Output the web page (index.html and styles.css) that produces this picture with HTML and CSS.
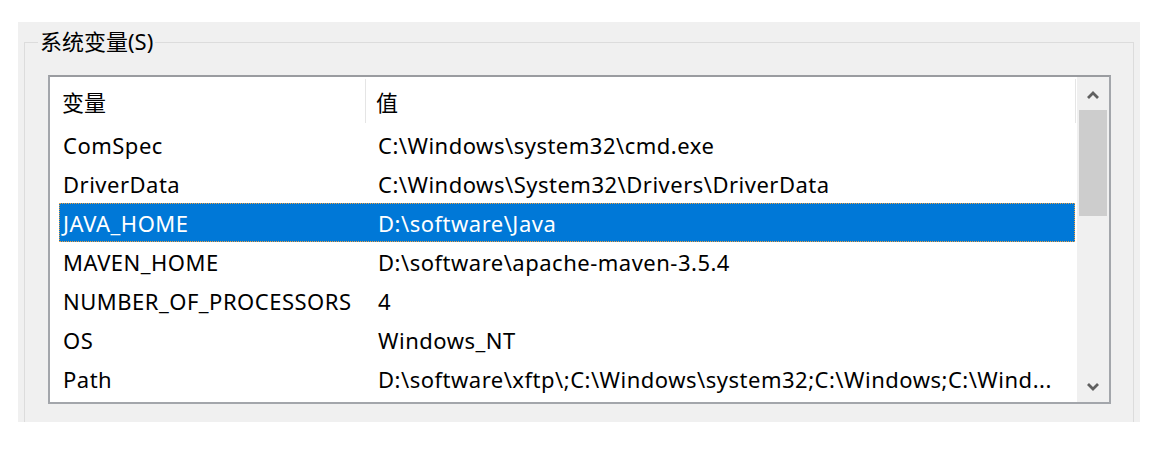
FILE: index.html
```html
<!DOCTYPE html>
<html lang="zh-CN">
<head>
<meta charset="utf-8">
<title>系统变量</title>
<link rel="stylesheet" href="styles.css">
</head>
<body>
<div class="panel">
  <fieldset class="group">
    <legend class="legend">系统变量(S)</legend>
    <div class="listbox">
      <div class="listmain">
        <div class="header">
          <div class="hcell hname">变量</div>
          <div class="hcell hvalue">值</div>
        </div>
        <div class="row"><div class="cname">ComSpec</div><div class="cvalue">C:\Windows\system32\cmd.exe</div></div>
        <div class="row"><div class="cname">DriverData</div><div class="cvalue">C:\Windows\System32\Drivers\DriverData</div></div>
        <div class="row selected"><div class="cname">JAVA_HOME</div><div class="cvalue">D:\software\Java</div></div>
        <div class="row"><div class="cname">MAVEN_HOME</div><div class="cvalue">D:\software\apache-maven-3.5.4</div></div>
        <div class="row"><div class="cname">NUMBER_OF_PROCESSORS</div><div class="cvalue">4</div></div>
        <div class="row"><div class="cname">OS</div><div class="cvalue">Windows_NT</div></div>
        <div class="row"><div class="cname">Path</div><div class="cvalue">D:\software\xftp\;C:\Windows\system32;C:\Windows;C:\Wind...</div></div>
      </div>
      <div class="scrollbar">
        <div class="sbtn sbtn-up">
          <svg width="14" height="10" viewBox="0 0 14 10"><path d="M2 8 L7 3 L12 8" fill="none" stroke="#606060" stroke-width="2.8"/></svg>
        </div>
        <div class="thumb"></div>
        <div class="track"></div>
        <div class="sbtn sbtn-down">
          <svg width="14" height="10" viewBox="0 0 14 10"><path d="M2 2 L7 7 L12 2" fill="none" stroke="#606060" stroke-width="2.8"/></svg>
        </div>
      </div>
    </div>
  </fieldset>
</div>
</body>
</html>
```
FILE: styles.css
```css
html, body {
  margin: 0;
  padding: 0;
  background: #ffffff;
}
body {
  font-family: "Noto Sans", "Noto Sans CJK SC", sans-serif;
  font-size: 22px;
  letter-spacing: 0.5px;
  color: #000;
}
.panel {
  margin: 22px 0 0 18px;
  width: 1122px;
  height: 400px;
  background: #f0f0f0;
  overflow: hidden;
  padding: 7px 0 0 6px;
  box-sizing: border-box;
}
.group {
  margin: 0;
  width: 1110px;
  box-sizing: border-box;
  border: 1px solid #dcdcdc;
  padding: 19px 0 40px 23px;
  min-width: 0;
  height: 460px;
}
.legend {
  padding: 0 2px 3px;
  margin-left: -10px;
  font-size: 22px;
  letter-spacing: 0;
  line-height: 24px;
  color: #000;
}
.listbox {
  width: 1063px;
  height: 329px;
  box-sizing: border-box;
  border: 2px solid #a3a6ab;
  border-top-color: #9a9ca0;
  background: #fff;
  display: flex;
}
.listmain {
  flex: 1;
  padding-left: 9px;
  overflow: hidden;
}
.header {
  height: 48px;
  display: flex;
  align-items: center;
  width: 1017px;
}
.hcell {
  height: 44px;
  display: flex;
  align-items: center;
  letter-spacing: 0;
}
.hname {
  width: 307px;
  padding-left: 3px;
  box-sizing: border-box;
  border-right: 1px solid #e5e5e5;
}
.hvalue {
  flex: 1;
  padding-left: 10px;
  border-right: 1px solid #e5e5e5;
}
.row {
  height: 39px;
  width: 1016px;
  display: flex;
  align-items: center;
  box-sizing: border-box;
  border: 1px solid transparent;
  white-space: nowrap;
}
.cname {
  width: 314px;
  padding-left: 3px;
  box-sizing: border-box;
  overflow: hidden;
}
.cvalue {
  flex: 1;
  padding-left: 4px;
  overflow: hidden;
}
.selected {
  background: #0078d7;
  color: #fff;
  border: 1px dotted #f0a040;
}
.scrollbar {
  width: 32px;
  background: #f0f0f0;
  display: flex;
  flex-direction: column;
  margin-left: 1px;
}
.sbtn {
  display: flex;
  align-items: center;
  justify-content: center;
  box-sizing: border-box;
}
.sbtn-up {
  height: 33px;
  padding-top: 3px;
}
.sbtn-down {
  height: 30px;
}
.thumb {
  height: 106px;
  margin: 0 2px;
  background: #cdcdcd;
}
.track {
  flex: 1;
}
```
